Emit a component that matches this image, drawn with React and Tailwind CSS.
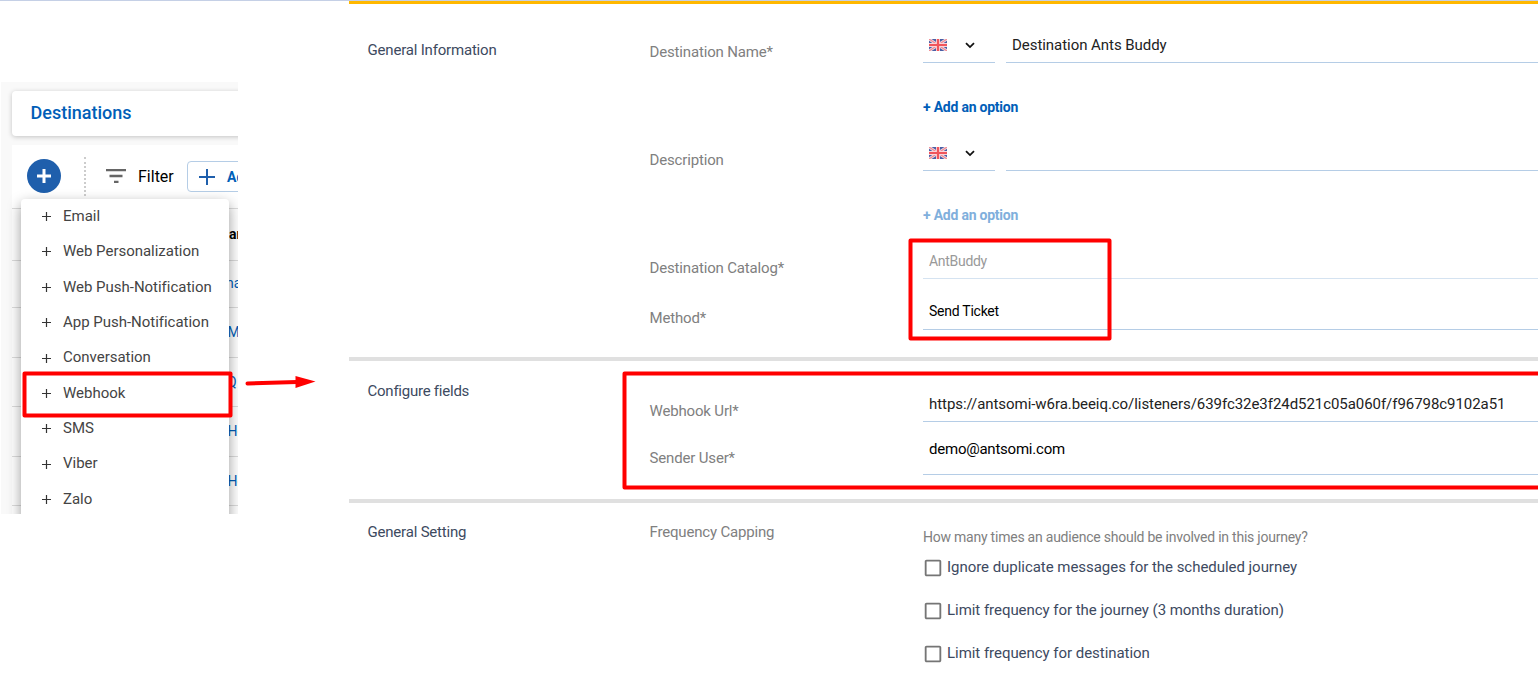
import React from "react";

const MENU = [
  "Email",
  "Web Personalization",
  "Web Push-Notification",
  "App Push-Notification",
  "Conversation",
  "Webhook",
  "SMS",
  "Viber",
  "Zalo",
];

function Flag() {
  return (
    <svg width="18" height="12" viewBox="0 0 18 12" className="block shrink-0">
      <rect width="18" height="12" fill="#4a5fa5" />
      <path d="M0 0L18 12M18 0L0 12" stroke="#f3dde5" strokeWidth="2.8" />
      <path d="M0 0L18 12M18 0L0 12" stroke="#f08a92" strokeWidth="1.2" />
      <path d="M9 0V12M0 6H18" stroke="#f9d5da" strokeWidth="4" />
      <path d="M9 0V12M0 6H18" stroke="#f0555c" strokeWidth="2.2" />
    </svg>
  );
}

function Chevron() {
  return (
    <svg width="10" height="7" viewBox="0 0 10 7" className="mt-px block shrink-0">
      <path d="M1 1.2L5 5.1L9 1.2" fill="none" stroke="#111" strokeWidth="1.8" />
    </svg>
  );
}

function Label({ children }) {
  return (
    <div className="mt-[19px] h-5 w-[274px] shrink-0 pl-[0.5px] text-[15px] leading-5 tracking-[-0.16px] text-[#808080]">
      {children}
    </div>
  );
}

function LocalizedField({ label, value, faded }) {
  return (
    <div className="flex h-[108px]">
      <Label>{label}</Label>
      <div className="flex-1 pt-1">
        <div className="flex gap-[11px]">
          <div className="flex h-9 w-[72px] items-center gap-[18px] border-b border-[#b5cde6] pl-1.5">
            <Flag />
            <Chevron />
          </div>
          <div className="flex h-9 flex-1 items-center border-b border-[#b5cde6] pl-1.5 pt-0.5 text-[15px] tracking-[-0.05px] text-[#222]">
            {value}
          </div>
        </div>
        <div
          className={
            faded
              ? "mt-[34px] text-sm font-bold leading-5 tracking-[-0.23px] text-[#80afdc]"
              : "mt-[34px] text-sm font-bold leading-5 tracking-[-0.23px] text-[#005eb8]"
          }
        >
          + Add an option
        </div>
      </div>
    </div>
  );
}

function Check({ children }) {
  return (
    <div className="flex h-[43px] items-start">
      <svg width="22" height="22" viewBox="0 0 24 24" className="-ml-px mt-px block shrink-0">
        <path
          fill="#757575"
          d="M19 5v14H5V5h14m0-2H5c-1.1 0-2 .9-2 2v14c0 1.100.9 2 2 2h14c1.100 0 2-.9 2-2V5c0-1.100-.9-2-2-2z"
        />
      </svg>
      <span className="ml-[3px] text-[15px] leading-[22px] tracking-[-0.04px] text-[#3d4a5f]">{children}</span>
    </div>
  );
}

function DestinationsPanel() {
  return (
    <div className="relative mt-[81px] ml-px h-[432px] w-[237px] overflow-hidden bg-[#f9f9f9] pl-[11px] pt-[9px]">
      <div className="flex h-[45px] w-[260px] items-center rounded bg-white pb-0.5 pl-[18.5px] text-lg font-medium text-[#005eb8] shadow-[0_1px_5px_rgba(0,0,0,0.22)]">
        Destinations
      </div>
      <div className="mt-[9px] w-[260px] bg-white">
        <div className="flex h-16 items-center border-b border-[#dcdcdc] pb-px pl-[15px]">
          <div className="flex h-[34px] w-[34px] shrink-0 items-center justify-center rounded-full bg-[#1f5fac]">
            <svg width="14" height="14" viewBox="0 0 14 14">
              <path d="M7 0V14M0 7H14" stroke="#fff" strokeWidth="3" />
            </svg>
          </div>
          <div className="ml-[23px] mt-px h-[39px] shrink-0 border-l-2 border-dotted border-[#cccccc]" />
          <svg width="20" height="14" viewBox="0 0 20 14" className="ml-5 shrink-0">
            <path d="M0 1H20M3.500 7H16.500M8 13H12.500" stroke="#666" strokeWidth="2.4" />
          </svg>
          <span className="ml-3 w-[49px] shrink-0 pt-px text-base text-black">Filter</span>
          <div className="mt-px flex h-[31px] w-[90px] shrink-0 items-center rounded-sm border border-[#b5cde6] pl-[11px] text-sm font-bold text-[#005eb8]">
            <svg width="16" height="16" viewBox="0 0 16 16" className="mr-3">
              <path d="M8 0V16M0 8H16" stroke="#1f5fac" strokeWidth="2" />
            </svg>
            Add
          </div>
        </div>
        <div className="flex h-[52px] items-center border-b border-[#dcdcdc] pb-0.5 pl-[217px] text-sm font-bold text-black">ar</div>
        <div className="flex h-[47px] items-center border-b border-[#dcdcdc] pb-0.5 pl-[214px] text-sm text-[#005eb8]">na</div>
        <div className="flex h-[50px] items-center border-b border-[#dcdcdc] pb-0.5 pl-[215.5px] text-sm text-[#005eb8]">M</div>
        <div className="flex h-[49px] items-center border-b border-[#dcdcdc] pl-[215px] text-sm text-[#005eb8]">Q</div>
        <div className="flex h-[50px] items-center border-b border-[#dcdcdc] pb-0.5 pl-[215.5px] text-sm text-[#005eb8]">Ho</div>
        <div className="flex h-[49px] items-center border-b border-[#dcdcdc] pl-[215.5px] text-sm text-[#005eb8]">Ho</div>
        <div className="h-5" />
      </div>
      <div className="absolute left-5 top-[117px] h-[340px] w-[208px] rounded bg-white shadow-[0_5px_14px_rgba(0,0,0,0.4)]">
        <div className="-mt-[0.6px]">
          {MENU.map((m) => (
            <div key={m} className="flex h-[35.38px] items-center gap-3 pl-[21px] text-[15px] tracking-[-0.02px] text-[#444]">
              <svg width="9" height="9" viewBox="0 0 9 9" className="mt-px shrink-0">
                <path d="M4.500 0V9M0 4.500H9" stroke="#333" strokeWidth="1.200" />
              </svg>
              {m}
            </div>
          ))}
        </div>
      </div>
    </div>
  );
}

function SettingsForm() {
  return (
    <div className="min-w-0 flex-1 border-t-[3px] border-[#ffb800]">
      <section className="flex h-[357px] border-b-4 border-[#e0e0e0] pl-[18px] pt-[19px]">
        <h2 className="mt-[17px] w-[282px] shrink-0 pl-[0.5px] text-[15px] leading-5 tracking-[-0.19px] text-[#3d4a5f]">
          General Information
        </h2>
        <div className="flex-1">
          <LocalizedField label="Destination Name*" value="Destination Ants Buddy" />
          <LocalizedField label="Description" value="" faded />
          <div className="flex h-[50px]">
            <Label>Destination Catalog*</Label>
            <div className="mt-1 flex h-9 flex-1 items-center border-b border-[#d5e3f1] pl-1.5 text-sm tracking-[-0.3px] text-[#999]">
              AntBuddy
            </div>
          </div>
          <div className="flex h-[60px]">
            <Label>Method*</Label>
            <div className="mt-[5px] flex h-9 flex-1 items-center border-b border-[#b5cde6] pb-0.5 pl-1.5 text-sm tracking-[-0.25px] text-black">
              Send Ticket
            </div>
          </div>
        </div>
      </section>
      <section className="flex h-[142px] border-b-4 border-[#e0e0e0] pl-[18px] pt-[21px]">
        <h2 className="-mt-px w-[282px] shrink-0 pl-[0.5px] text-[15px] leading-5 tracking-[-0.24px] text-[#3d4a5f]">
          Configure fields
        </h2>
        <div className="flex-1">
          <div className="flex h-[47px]">
            <Label>Webhook Url*</Label>
            <div className="mt-1 flex h-9 flex-1 items-center border-b border-[#b5cde6] pl-1.5 pt-0.5 text-[15px] tracking-[-0.055px] text-[#222]">
              https://antsomi-w6ra.beeiq.co/listeners/639fc32e3f24d521c05a060f/f96798c9102a51
            </div>
          </div>
          <div className="flex h-[47px]">
            <Label>Sender User*</Label>
            <div className="mt-0.5 flex h-11 flex-1 items-center border-b border-[#b5cde6] pb-1.5 pl-1.5 text-[15px] tracking-[-0.23px] text-black">
              demo@antsomi.com
            </div>
          </div>
        </div>
      </section>
      <section className="flex pl-[18px] pt-[19px]">
        <h2 className="w-[282px] shrink-0 pl-[0.5px] text-[15px] leading-5 tracking-[-0.2px] text-[#3d4a5f]">
          General Setting
        </h2>
        <div className="w-[274px] shrink-0 pl-[0.5px] text-[15px] leading-5 tracking-[-0.18px] text-[#808080]">
          Frequency Capping
        </div>
        <div className="flex-1 pt-[5px]">
          <p className="mb-[9px] text-sm leading-5 tracking-[-0.23px] text-[#808080]">
            How many times an audience should be involved in this journey?
          </p>
          <Check>Ignore duplicate messages for the scheduled journey</Check>
          <Check>Limit frequency for the journey (3 months duration)</Check>
          <Check>Limit frequency for destination</Check>
        </div>
      </section>
    </div>
  );
}

function Annotations() {
  return (
    <svg width="1538" height="695" className="block">
      <g fill="none" stroke="#ff0000" strokeWidth="4" strokeLinejoin="round" strokeLinecap="round">
        <rect x="910.500" y="240.500" width="199" height="98" />
        <rect x="624.500" y="373.500" width="930" height="114" />
        <rect x="24.500" y="373.500" width="206" height="42" />
        <path d="M247.500 383.500L297 382" />
      </g>
      <path d="M295.500 376L315.500 381.500L295.500 388Z" fill="#ff0000" />
    </svg>
  );
}

export default function App() {
  return (
    <div className="relative flex h-[695px] w-[1538px] overflow-hidden border-t border-[#c5d0e6] bg-white font-[Roboto,'Liberation_Sans',sans-serif]">
      <div className="w-[349px] shrink-0">
        <DestinationsPanel />
      </div>
      <SettingsForm />
      <div className="pointer-events-none absolute left-0 -top-px">
        <Annotations />
      </div>
    </div>
  );
}
